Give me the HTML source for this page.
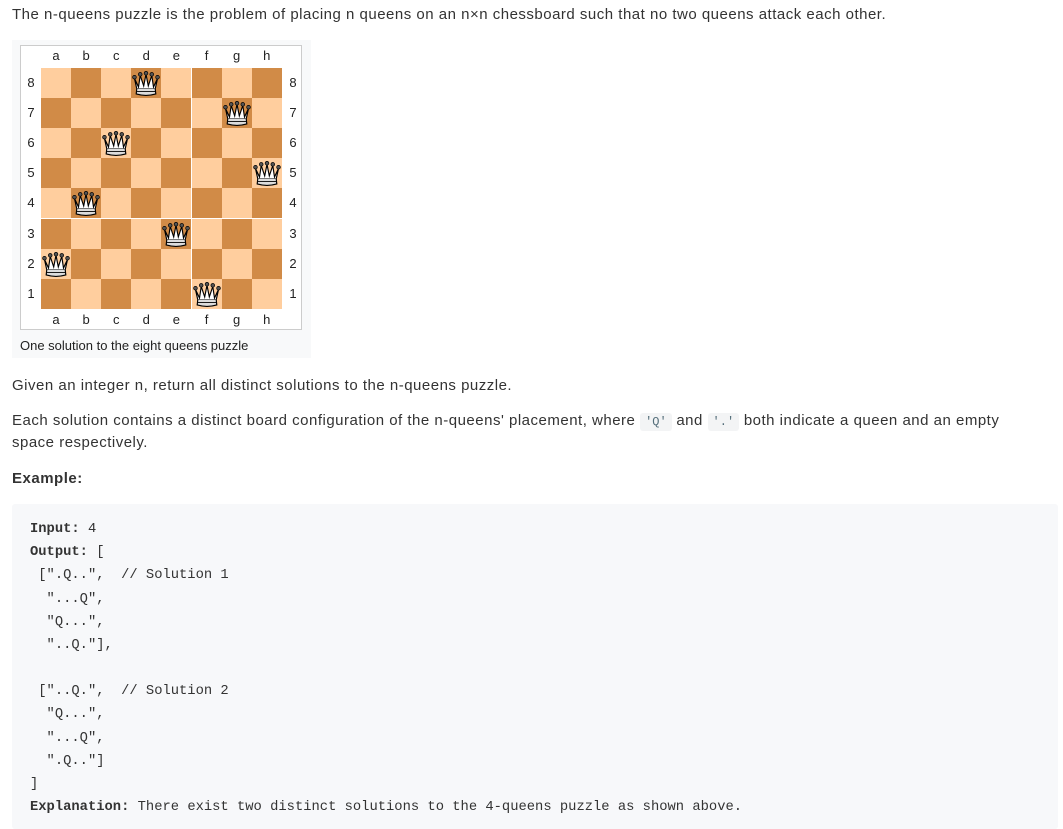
<!DOCTYPE html>
<html><head><meta charset="utf-8"><style>
body{margin:0;background:#fff;font-family:"Liberation Sans",sans-serif;color:#333;width:1063px;height:829px;position:relative;overflow:hidden}
.p{position:absolute;left:12px;font-size:15px;letter-spacing:0.5px;margin:0;white-space:nowrap}
.fig{position:absolute;left:12px;top:40px;width:299px;height:318px;background:#f8f9fa}
.box{position:absolute;left:20px;top:45px;width:282px;height:285px;background:#fff;border:1px solid #ccc;box-sizing:border-box}
.sq{position:absolute;width:30px;height:30px}
.l{position:absolute;font-size:13px;color:#222;width:30px;text-align:center;font-family:"Liberation Sans",sans-serif}
code{font-family:"Liberation Mono",monospace;font-size:12px;letter-spacing:0;background:#f3f4f5;color:#546e7a;padding:2px 5px;border-radius:3px}
pre{position:absolute;left:12px;top:504px;width:1046px;height:325px;margin:0;background:#f7f8fa;box-sizing:border-box;padding:14px 18px;font-family:"Liberation Mono",monospace;font-size:13.8px;line-height:23.17px;color:#333;border-radius:3px}
b{font-weight:bold}
</style></head><body>
<p class="p" style="top:6px;">The n-queens puzzle is the problem of placing n queens on an n×n chessboard such that no two queens attack each other.</p>
<div class="fig"></div>
<div class="box"></div>
<div id="b"></div>
<svg width="0" height="0" style="position:absolute"><defs><g id="q">
<path d="M3 9 L6.5 16.5 L8 6.5 L11 15.5 L13 5.5 L15 15.5 L18 6.5 L19.5 16.5 L23 9 L21 18 L5 18 Z" fill="#fff" stroke="#000" stroke-width="1"/>
<circle cx="3" cy="8" r="1.6" fill="#555" stroke="#000" stroke-width=".6"/><circle cx="8" cy="5.5" r="1.6" fill="#555" stroke="#000" stroke-width=".6"/><circle cx="13" cy="4.5" r="1.6" fill="#555" stroke="#000" stroke-width=".6"/><circle cx="18" cy="5.5" r="1.6" fill="#555" stroke="#000" stroke-width=".6"/><circle cx="23" cy="8" r="1.6" fill="#555" stroke="#000" stroke-width=".6"/>
<path d="M5 18 L4.5 22.5 Q13 25 21.5 22.5 L21 18" fill="#ddd" stroke="#000" stroke-width="1"/>
<path d="M5 20.3 H21" stroke="#000" stroke-width=".8"/>
</g></defs></svg>
<script>
var h='';var Q={8:3,7:6,6:2,5:7,4:1,3:4,2:0,1:5};var f='abcdefgh';
for(var r=0;r<8;r++){var rank=8-r;for(var c=0;c<8;c++){var x=41+c*30.1,y=68+r*30.1;var light=(r+c)%2==0;
h+='<div class="sq" style="left:'+x+'px;top:'+y+'px;background:'+(light?'#ffce9e':'#d18b47')+'">'+(Q[rank]==c?'<svg width="30" height="30" viewBox="0 0 26 26"><use href="#q"/></svg>':'')+'</div>';}
h+='<div class="l" style="left:16px;top:'+(75+r*30.1)+'px">'+rank+'</div><div class="l" style="left:278px;top:'+(75+r*30.1)+'px">'+rank+'</div>';}
for(var c=0;c<8;c++){var x=41+c*30.1;h+='<div class="l" style="left:'+x+'px;top:48px">'+f[c]+'</div><div class="l" style="left:'+x+'px;top:312px">'+f[c]+'</div>';}
h+='<div class="l" style="left:20px;top:338px;width:auto;text-align:left">One solution to the eight queens puzzle</div>';
document.getElementById('b').innerHTML=h;
</script>
<p class="p" style="top:377px;">Given an integer n, return all distinct solutions to the n-queens puzzle.</p>
<p class="p" style="top:412px;">Each solution contains a distinct board configuration of the n-queens' placement, where <code>'Q'</code> and <code>'.'</code> both indicate a queen and an empty</p>
<p class="p" style="top:434px;">space respectively.</p>
<p class="p" style="top:470px;font-weight:bold;">Example:</p>
<pre><b>Input:</b> 4
<b>Output:</b> [
 [".Q..",  // Solution 1
  "...Q",
  "Q...",
  "..Q."],

 ["..Q.",  // Solution 2
  "Q...",
  "...Q",
  ".Q.."]
]
<b>Explanation:</b> There exist two distinct solutions to the 4-queens puzzle as shown above.</pre>
</body></html>
